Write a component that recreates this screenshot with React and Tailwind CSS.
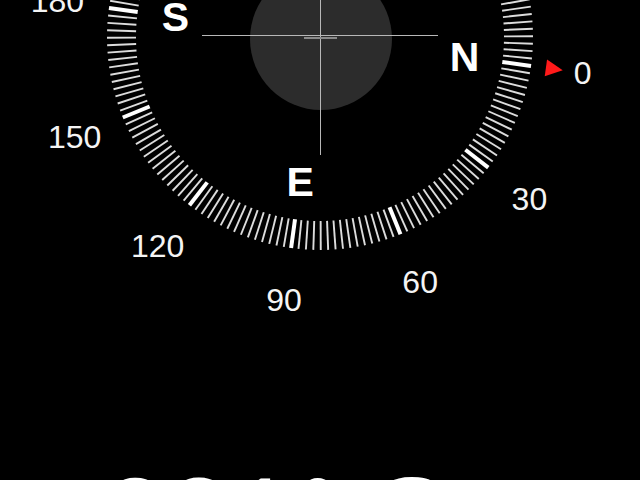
const CX = 320;
const CY = 37;
const OFFSET = 7.8;

const polar = (deg, r) => {
  const a = ((deg + OFFSET) * Math.PI) / 180;
  return [CX + r * Math.cos(a), CY + r * Math.sin(a)];
};

const ticks = Array.from({ length: 180 }, (_, i) => i * 2);
const numbers = [0, 30, 60, 90, 120, 150, 180, 210, 240, 270, 300, 330];
const letters = [
  { label: 'N', deg: 0 },
  { label: 'E', deg: 90 },
  { label: 'S', deg: 180 },
  { label: 'W', deg: 270 },
];

const Dial = () => {
  const [t1x, t1y] = polar(0, 228);
  const tip = polar(0, 245);
  const a = ((0 + OFFSET) * Math.PI) / 180;
  const nx = -Math.sin(a) * 8.5;
  const ny = Math.cos(a) * 8.5;

  return (
    <svg width="640" height="461" viewBox="0 0 640 461" className="absolute inset-0">
      {/* level disc */}
      <circle cx="321" cy="39" r="71" fill="#2c2c2c" />

      {/* tick ring */}
      {ticks.map((d) => {
        const major = d % 30 === 0;
        const [x1, y1] = polar(d, 184);
        const [x2, y2] = polar(d, 213);
        return (
          <line
            key={d}
            x1={x1}
            y1={y1}
            x2={x2}
            y2={y2}
            stroke={major ? '#ffffff' : '#dcdcdc'}
            strokeWidth={major ? 4 : 1.9}
          />
        );
      })}

      {/* crosshair */}
      <line x1="202" y1="35.5" x2="438" y2="35.5" stroke="#b8b8b8" strokeWidth="1" />
      <line x1="320.5" y1="0" x2="320.5" y2="155" stroke="#b8b8b8" strokeWidth="1" />
      <rect x="304" y="37" width="33" height="2" fill="#8a8a8a" />

      {/* heading marker */}
      <polygon
        points={`${t1x + nx},${t1y + ny} ${t1x - nx},${t1y - ny} ${tip[0]},${tip[1]}`}
        fill="#ff1a1a"
      />
    </svg>
  );
};

export default function App() {
  return (
    <div className="w-[640px] h-[480px] bg-black overflow-hidden flex flex-col font-['Liberation_Sans',Arial,sans-serif] text-white">
      <div className="relative w-full h-[461px] shrink-0">
        <Dial />

        {numbers.map((n) => {
          const [x, y] = polar(n, 265);
          return (
            <span
              key={n}
              className="absolute -translate-x-1/2 -translate-y-1/2 text-[32px] leading-none text-[#f4f4f4]"
              style={{ left: x, top: y }}
            >
              {n}
            </span>
          );
        })}

        {letters.map(({ label, deg }) => {
          const [x, y] = polar(deg, 146);
          return (
            <span
              key={label}
              className="absolute -translate-x-1/2 -translate-y-1/2 text-[41px] font-bold leading-none"
              style={{ left: x, top: y }}
            >
              {label}
            </span>
          );
        })}
      </div>

      <div className="pl-[103px] text-[115px] leading-none whitespace-nowrap">281° S</div>
    </div>
  );
}
